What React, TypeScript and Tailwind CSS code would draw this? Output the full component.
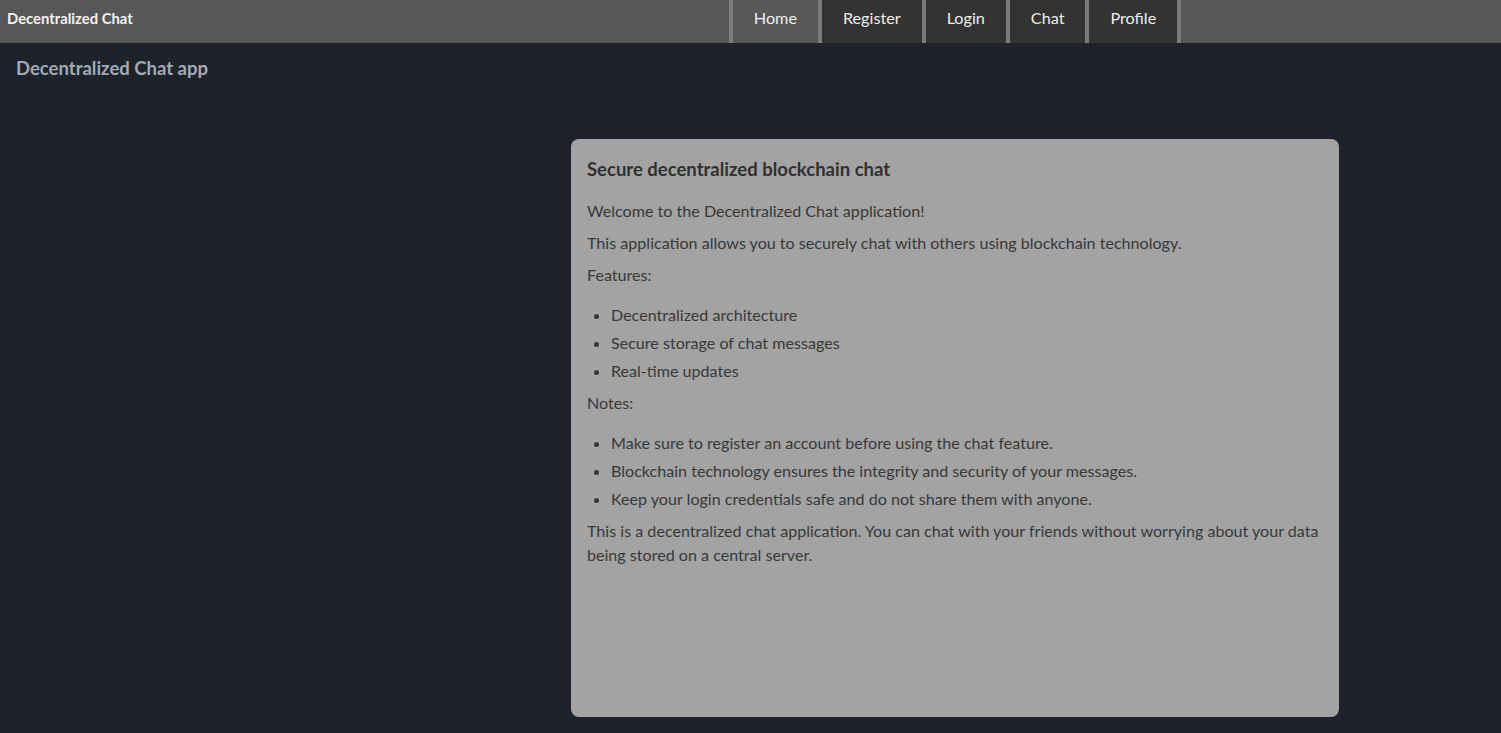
import React from "react";

const navItems = ["Home", "Register", "Login", "Chat", "Profile"];

export default function App() {
  return (
    <div className="min-h-screen bg-[#1e222a] font-['Lato',sans-serif]">
      {/* Top bar */}
      <header className="flex h-[43px] bg-[#575757]">
        <div className="w-[409px] shrink-0 pl-[7px] pt-[9px] text-[14.8px] leading-[18px] font-bold text-[#f2f2f2]">
          Decentralized Chat
        </div>
        <nav className="flex flex-1 justify-center">
          {navItems.map((item, i) => (
            <a
              key={item}
              href="#"
              className={`h-[43px] border-l-4 border-[#7a7a7a] px-[21px] pt-[6px] text-[16.2px] leading-[24px] text-[#eeeeee] ${
                i === 0 ? "bg-[#575757]" : "bg-[#333333]"
              } ${i === navItems.length - 1 ? "border-r-4" : ""}`}
            >
              {item}
            </a>
          ))}
        </nav>
      </header>

      {/* Page title */}
      <h1 className="pl-4 pt-[11px] text-[18.5px] leading-[28px] font-bold text-[#a3aab5]">
        Decentralized Chat app
      </h1>

      <div className="flex">
        <div className="w-[409px] shrink-0" />
        <div className="flex flex-1 justify-center">
          <section className="mt-[57px] h-[578px] w-[768px] rounded-lg bg-[#a3a3a3] p-4 text-[16.1px] leading-[24px] text-[#383838]">
            <h2 className="mb-4 text-[18.5px] leading-[28px] font-bold text-[#303030]">
              Secure decentralized blockchain chat
            </h2>
            <p className="mb-2">Welcome to the Decentralized Chat application!</p>
            <p className="mb-2">This application allows you to securely chat with others using blockchain technology.</p>
            <p>Features:</p>
            <ul className="mt-4 mb-2 list-disc space-y-1 pl-6">
              <li>Decentralized architecture</li>
              <li>Secure storage of chat messages</li>
              <li>Real-time updates</li>
            </ul>
            <p>Notes:</p>
            <ul className="mt-4 mb-2 list-disc space-y-1 pl-6">
              <li>Make sure to register an account before using the chat feature.</li>
              <li>Blockchain technology ensures the integrity and security of your messages.</li>
              <li>Keep your login credentials safe and do not share them with anyone.</li>
            </ul>
            <p>
              This is a decentralized chat application. You can chat with your friends without worrying about your data
              being stored on a central server.
            </p>
          </section>
        </div>
      </div>
    </div>
  );
}
